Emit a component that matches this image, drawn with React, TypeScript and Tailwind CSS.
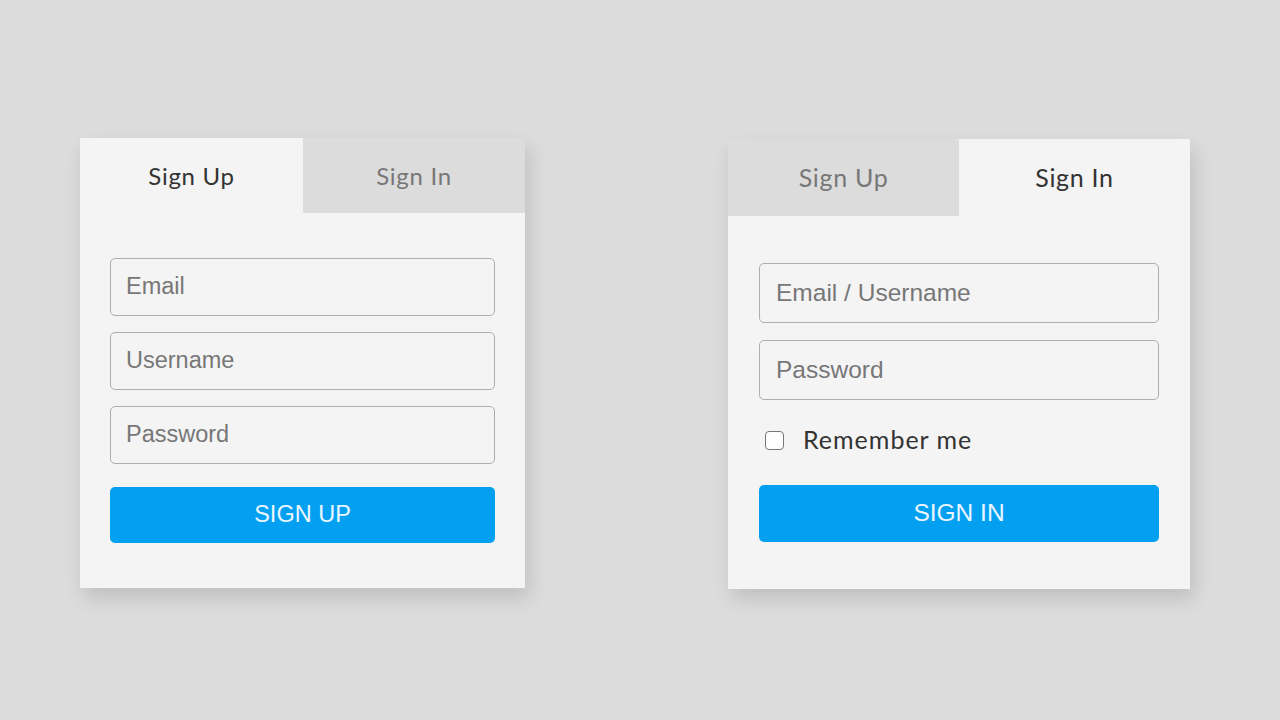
import React from "react";

const raleway = { fontFamily: "Lato, 'Noto Sans', sans-serif" };
const arial = { fontFamily: "'Liberation Sans', Arial, sans-serif" };

function Input({ ph, h, size, pl }: { ph: string; h: string; size: string; pl: string }) {
  return (
    <div
      className={`${h} ${size} ${pl} w-full flex items-center border border-[#aeaeae] rounded-[5px] bg-[#f4f4f4] text-[#777]`}
      style={arial}
    >
      {ph}
    </div>
  );
}

export default function App() {
  return (
    <div className="w-[1280px] h-[720px] bg-[#dcdcdc] flex items-start pl-[80px] pt-[138px] gap-[203px] overflow-hidden">
      {/* Left card */}
      <div className="w-[445px] h-[450px] bg-[#f4f4f4] shadow-[4px_10px_18px_rgba(0,0,0,0.13)] flex flex-col">
        <div className="flex h-[75px]" style={raleway}>
          <div className="w-[223px] flex items-center justify-center text-[24px] tracking-[0.7px] text-[#333]">Sign Up</div>
          <div className="flex-1 flex items-center justify-center text-[24px] tracking-[0.7px] text-[#777] bg-[#dcdcdc]">Sign In</div>
        </div>
        <div className="px-[30px] pt-[45px] flex flex-col gap-[16px]">
          <Input ph="Email" h="h-[58px]" size="text-[23.5px]" pl="pl-[15px]" />
          <Input ph="Username" h="h-[58px]" size="text-[23.5px]" pl="pl-[15px]" />
          <Input ph="Password" h="h-[58px]" size="text-[23.5px]" pl="pl-[15px]" />
          <div
            className="mt-[7px] h-[56px] rounded-[5px] bg-[#03a0f2] flex items-center justify-center text-[23.5px] text-[#eaf6ff]"
            style={arial}
          >
            SIGN UP
          </div>
        </div>
      </div>

      {/* Right card */}
      <div className="mt-[1px] w-[462px] h-[450px] bg-[#f4f4f4] shadow-[4px_10px_18px_rgba(0,0,0,0.13)] flex flex-col">
        <div className="flex h-[77px]" style={raleway}>
          <div className="w-[231px] flex items-center justify-center text-[25px] tracking-[0.7px] text-[#777] bg-[#dcdcdc]">Sign Up</div>
          <div className="flex-1 flex items-center justify-center text-[25px] tracking-[0.7px] text-[#333]">Sign In</div>
        </div>
        <div className="px-[31px] pt-[47px] flex flex-col">
          <Input ph="Email / Username" h="h-[60px]" size="text-[24.5px]" pl="pl-[16px]" />
          <div className="mt-[17px]">
            <Input ph="Password" h="h-[60px]" size="text-[24.5px]" pl="pl-[16px]" />
          </div>
          <div className="mt-[25px] h-[30px] flex items-center">
            <div className="ml-[6px] w-[19px] h-[19px] rounded-[4px] border border-[#767676] bg-white" />
            <span className="ml-[19px] text-[25px] tracking-[1px] text-[#333]" style={raleway}>
              Remember me
            </span>
          </div>
          <div
            className="mt-[30px] h-[57px] rounded-[5px] bg-[#03a0f2] flex items-center justify-center text-[24.5px] text-[#eaf6ff]"
            style={arial}
          >
            SIGN IN
          </div>
        </div>
      </div>
    </div>
  );
}
